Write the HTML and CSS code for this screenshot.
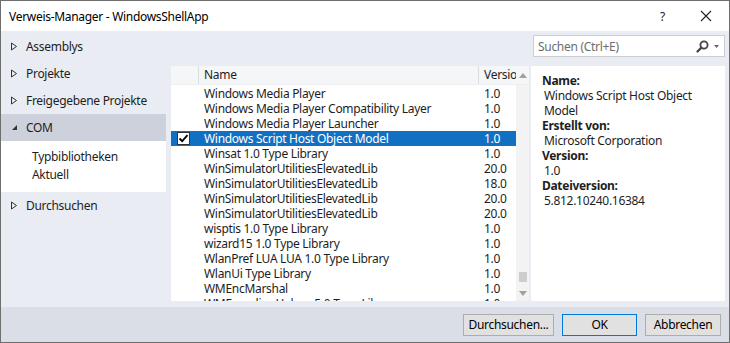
FILE: index.html
```html
<!DOCTYPE html>
<html lang="de">
<head>
  <meta charset="UTF-8">
  <title>Verweis-Manager - WindowsShellApp</title>
  <link rel="stylesheet" href="styles.css">
</head>
<body>
  <div class="window">
    <div class="titlebar">
      <span class="title">Verweis-Manager - WindowsShellApp</span>
      <span class="help">?</span>
      <svg class="close" width="12" height="12" viewBox="0 0 12 12"><path d="M1 1L11 11M11 1L1 11" stroke="#222" stroke-width="1.1" fill="none"/></svg>
    </div>

    <div class="main">
      <ul class="nav">
        <li class="nav-item"><svg class="arrow" width="8" height="9" viewBox="0 0 8 9"><path d="M1.5 1L6.5 4.5L1.5 8Z" fill="none" stroke="#333"/></svg>Assemblys</li>
        <li class="nav-item"><svg class="arrow" width="8" height="9" viewBox="0 0 8 9"><path d="M1.5 1L6.5 4.5L1.5 8Z" fill="none" stroke="#333"/></svg>Projekte</li>
        <li class="nav-item"><svg class="arrow" width="8" height="9" viewBox="0 0 8 9"><path d="M1.5 1L6.5 4.5L1.5 8Z" fill="none" stroke="#333"/></svg>Freigegebene Projekte</li>
        <li class="nav-item selected"><svg class="arrow" width="8" height="9" viewBox="0 0 8 9"><path d="M7 2L7 7L2 7Z" fill="#333"/></svg>COM</li>
        <li class="nav-sub">
          <div>Typbibliotheken</div>
          <div>Aktuell</div>
        </li>
        <li class="nav-item"><svg class="arrow" width="8" height="9" viewBox="0 0 8 9"><path d="M1.5 1L6.5 4.5L1.5 8Z" fill="none" stroke="#333"/></svg>Durchsuchen</li>
      </ul>

      <div class="content">
        <div class="searchrow">
          <div class="search">
            <span class="placeholder">Suchen (Ctrl+E)</span>
            <svg class="magnifier" width="13" height="13" viewBox="0 0 13 13"><circle cx="8" cy="5" r="3.6" fill="none" stroke="#444" stroke-width="1.8"/><path d="M5.4 7.6L1.5 11.5" stroke="#444" stroke-width="2.2" stroke-linecap="round"/></svg>
            <svg class="dropdown" width="5" height="3" viewBox="0 0 5 3"><path d="M0 0H5L2.5 3Z" fill="#666"/></svg>
          </div>
        </div>

        <div class="panes">
          <div class="list">
            <div class="list-head">
              <div class="col-check"></div>
              <div class="col-name">Name</div>
              <div class="col-ver">Versio</div>
              <div class="scroll-up"><svg width="8" height="5" viewBox="0 0 8 5"><path d="M0 5L4 0L8 5Z" fill="#a0a0a0"/></svg></div>
            </div>
            <div class="list-body">
              <div class="rows" id="rows"></div>
              <div class="scrollbar">
                <div class="thumb"></div>
                <svg class="scroll-down" width="8" height="5" viewBox="0 0 8 5"><path d="M0 0L8 0L4 5Z" fill="#a0a0a0"/></svg>
              </div>
            </div>
          </div>

          <div class="details">
            <div class="label">Name:</div>
            <div class="value">Windows Script Host Object Model</div>
            <div class="label">Erstellt von:</div>
            <div class="value">Microsoft Corporation</div>
            <div class="label">Version:</div>
            <div class="value">1.0</div>
            <div class="label">Dateiversion:</div>
            <div class="value">5.812.10240.16384</div>
          </div>
        </div>
      </div>
    </div>

    <div class="footer">
      <button class="btn btn-browse">Durchsuchen...</button>
      <button class="btn btn-ok">OK</button>
      <button class="btn btn-cancel">Abbrechen</button>
    </div>
  </div>

  <script>
    // COM-Typbibliotheken
    const libs = [
      ['Windows Media Player', '1.0'],
      ['Windows Media Player Compatibility Layer', '1.0'],
      ['Windows Media Player Launcher', '1.0'],
      ['Windows Script Host Object Model', '1.0', true],
      ['Winsat 1.0 Type Library', '1.0'],
      ['WinSimulatorUtilitiesElevatedLib', '20.0'],
      ['WinSimulatorUtilitiesElevatedLib', '18.0'],
      ['WinSimulatorUtilitiesElevatedLib', '20.0'],
      ['WinSimulatorUtilitiesElevatedLib', '20.0'],
      ['wisptis 1.0 Type Library', '1.0'],
      ['wizard15 1.0 Type Library', '1.0'],
      ['WlanPref LUA LUA 1.0 Type Library', '1.0'],
      ['WlanUi Type Library', '1.0'],
      ['WMEncMarshal', '1.0'],
      ['WMEncodingHelper 5.0 Type Lib', '1.0']
    ];

    const rows = document.getElementById('rows');
    libs.forEach(lib => {
      const row = document.createElement('div');
      row.className = 'row' + (lib[2] ? ' selected' : '');
      const check = document.createElement('div');
      check.className = 'col-check';
      if (lib[2]) {
        check.innerHTML = '<span class="checkbox"><svg width="11" height="11" viewBox="0 0 11 11"><path d="M1.5 5.5L4.2 8.2L9.5 2.2" fill="none" stroke="#000" stroke-width="1.8"/></svg></span>';
      }
      const name = document.createElement('div');
      name.className = 'col-name';
      name.textContent = lib[0];
      const ver = document.createElement('div');
      ver.className = 'col-ver';
      ver.textContent = lib[1];
      row.append(check, name, ver);
      rows.appendChild(row);
    });
  </script>
</body>
</html>
```

FILE: styles.css
```css
* {
  box-sizing: border-box;
}

body {
  margin: 0;
  font-family: "Noto Sans", "Open Sans", sans-serif;
  font-size: 12px;
  letter-spacing: -0.3px;
  color: #1e1e1e;
}

.window {
  width: 730px;
  height: 343px;
  border: 1px solid #6e6e6e;
  display: flex;
  flex-direction: column;
  background-color: #e9ecf2;
  overflow: hidden;
}

.titlebar {
  height: 30px;
  flex-shrink: 0;
  background-color: #fff;
  display: flex;
  align-items: center;
  padding-left: 8px;
}

.title {
  flex: 1;
  color: #000;
}

.help {
  width: 12px;
  margin-right: 28px;
  color: #222;
}

.close {
  margin-right: 17px;
}

.main {
  flex: 1;
  min-height: 0;
  display: flex;
}

/* Linke Navigation */
.nav {
  list-style: none;
  margin: 0;
  padding: 2px 0 0;
  width: 165px;
}

.nav-item {
  height: 27px;
  display: flex;
  align-items: center;
  padding-left: 9px;
}

.nav-item.selected {
  background-color: #ccd1dc;
}

.arrow {
  margin-right: 8px;
}

.nav-sub {
  background-color: #fff;
  padding: 7px 0 8px 31px;
  line-height: 18px;
}

/* Inhalt */
.content {
  flex: 1;
  min-height: 0;
  display: flex;
  flex-direction: column;
  padding: 0 4px 6px 5px;
}

.searchrow {
  height: 26px;
  flex-shrink: 0;
  display: flex;
  justify-content: flex-end;
  align-items: flex-end;
}

.search {
  width: 192px;
  height: 22px;
  background-color: #fff;
  border: 1px solid #ccced4;
  display: flex;
  align-items: center;
  padding: 0 5px 0 4px;
}

.placeholder {
  flex: 1;
  color: #6d6d6d;
}

.magnifier {
  margin-right: 5px;
}

.panes {
  flex: 1;
  min-height: 0;
  display: flex;
  gap: 2px;
  margin-top: 9px;
}

.list {
  width: 358px;
  display: flex;
  flex-direction: column;
  background-color: #fff;
  overflow: hidden;
}

.list-head {
  height: 19px;
  flex-shrink: 0;
  display: flex;
  background-color: #f5f6f7;
  border-bottom: 1px solid #eceef1;
}

.list-head .col-check {
  border-right: 1px solid #dcdde0;
}

.list-head .col-name {
  border-right: 1px solid #dcdde0;
}

.list-head .col-name,
.list-head .col-ver {
  line-height: 18px;
}

.scroll-up {
  width: 13px;
  display: flex;
  justify-content: center;
  align-items: center;
  background-color: #f5f6f7;
}

.list-body {
  flex: 1;
  min-height: 0;
  display: flex;
  overflow: hidden;
}

.rows {
  flex: 1;
  overflow: hidden;
  padding-top: 1px;
}

.row {
  height: 15px;
  line-height: 15px;
  display: flex;
  align-items: center;
}

.row.selected {
  background-color: #1270c3;
  color: #fff;
}

.col-check {
  width: 28px;
  height: 100%;
  display: flex;
  align-items: center;
  padding-left: 6px;
}

.col-name {
  width: 280px;
  padding-left: 5px;
  white-space: nowrap;
  overflow: hidden;
}

.col-ver {
  width: 37px;
  padding-left: 5px;
  white-space: nowrap;
  overflow: hidden;
}

.checkbox {
  width: 13px;
  height: 13px;
  background-color: #fff;
  border: 1px solid #333;
  display: flex;
  align-items: center;
  justify-content: center;
}

.scrollbar {
  width: 13px;
  background-color: #f3f3f3;
  display: flex;
  flex-direction: column;
  align-items: center;
  justify-content: flex-end;
  padding-bottom: 5px;
}

.thumb {
  width: 8px;
  height: 10px;
  background-color: #cdcdcd;
  margin-bottom: 9px;
}

.details {
  flex: 1;
  background-color: #fff;
  padding: 7px 10px 0 11px;
  line-height: 15px;
}

.label {
  font-weight: bold;
}

.value {
  padding-left: 2px;
}

/* Schaltflächen */
.footer {
  height: 35px;
  flex-shrink: 0;
  background-color: #d9dee7;
  display: flex;
  justify-content: flex-end;
  align-items: center;
  gap: 8px;
  padding-right: 8px;
}

.btn {
  height: 22px;
  font-family: inherit;
  font-size: 12px;
  letter-spacing: -0.3px;
  color: #000;
  background-color: #e1e1e1;
  border: 1px solid #adadad;
  padding: 0;
}

.btn-browse {
  width: 91px;
}

.btn-ok {
  width: 75px;
  border-color: #0078d7;
}

.btn-cancel {
  width: 76px;
}
```
